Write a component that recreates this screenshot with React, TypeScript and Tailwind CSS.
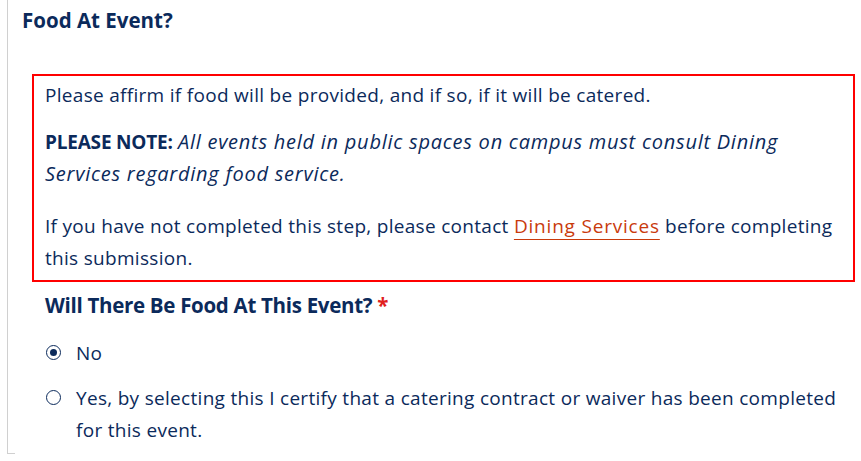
import React, { useState } from "react";

const FONT = { fontFamily: "'Open Sans', Arial, sans-serif" };

const Radio: React.FC<{ checked: boolean; onClick: () => void }> = ({
  checked,
  onClick,
}) => (
  <button
    type="button"
    onClick={onClick}
    className="mt-[8px] flex h-[15px] w-[15px] shrink-0 items-center justify-center rounded-full border border-[#0b2a5b] bg-white"
  >
    {checked && <span className="h-[7px] w-[7px] rounded-full bg-[#0b2a5b]" />}
  </button>
);

const App: React.FC = () => {
  const [food, setFood] = useState<"no" | "yes">("no");

  return (
    <div
      className="h-[461px] w-[861px] overflow-hidden bg-white text-[#0b2a5b]"
      style={FONT}
    >
      <div className="relative ml-[7px] h-[454px] border-l border-[#d0d0d0]">
        <h2 className="pl-[14px] pt-[7px] text-[20.5px] font-bold leading-[26px] tracking-[0px] text-[#0b2a5b]">
          Food At Event?
        </h2>

        <div className="ml-[24px] mr-[6px] mt-[41px] border-2 border-[#ff0000] pb-[6px] pl-[11px] pr-[4px] pt-[3px] text-[19px] leading-[32px] tracking-[0.3px]">
          <p>Please affirm if food will be provided, and if so, if it will be catered.</p>
          <p className="mt-[15px]">
            <strong className="font-bold tracking-[-0.2px]">PLEASE NOTE:</strong>{" "}
            <em className="text-[20px] tracking-[0.75px]">
              All events held in public spaces on campus must consult Dining
              <br />
              Services regarding food service.
            </em>
          </p>
          <p className="mt-[20px]">
            If you have not completed this step, please contact{" "}
            <a
              href="#"
              className="tracking-[0.8px] text-[#c93a0c] underline decoration-1 underline-offset-[6px]"
            >
              Dining Services
            </a>{" "}
            before completing
            <br />
            this submission.
          </p>
        </div>

        <h3 className="ml-[37px] mt-[10px] text-[20.5px] font-bold leading-[26px] tracking-[-0.3px]">
          Will There Be Food At This Event?{" "}
          <span className="text-[#e0201e]">*</span>
        </h3>

        <div className="ml-[38px] mt-[19px] flex flex-col gap-[13px] text-[19px] leading-[32px] tracking-[0.3px]">
          <label className="flex gap-[15px]">
            <Radio checked={food === "no"} onClick={() => setFood("no")} />
            <span>No</span>
          </label>
          <label className="flex gap-[15px]">
            <Radio checked={food === "yes"} onClick={() => setFood("yes")} />
            <span className="whitespace-nowrap">
              Yes, by selecting this I certify that a catering contract or
              waiver has been completed
              <br />
              for this event.
            </span>
          </label>
        </div>

        <div className="absolute bottom-0 left-0 h-px w-[7px] bg-[#d0d0d0]" />
      </div>
    </div>
  );
};

export default App;
